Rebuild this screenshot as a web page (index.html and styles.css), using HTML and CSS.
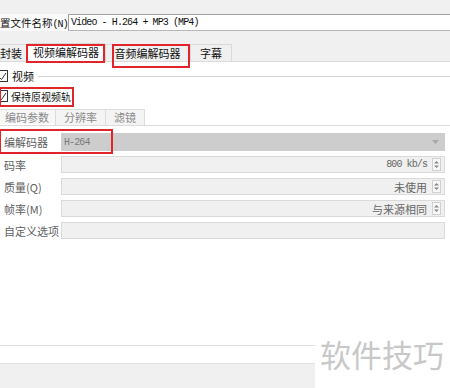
FILE: index.html
```html
<!DOCTYPE html>
<html lang="zh-CN">
  <head>
    <meta charset="UTF-8" />
    <title>视频编解码器</title>
    <link rel="stylesheet" href="styles.css">
  </head>
  <body>
    <div class="page">
      <div class="top-strip"></div>
      <div class="name-row">
        <span class="name-label">置文件名称<span class="mono">(N)</span></span>
        <div class="name-input"><span class="mono">Video - H.264 + MP3 (MP4)</span></div>
      </div>

      <div class="tabbar">
        <div class="tab tab-first">封装</div>
        <div class="tab tab-active">视频编解码器</div>
        <div class="tab tab-audio">音频编解码器</div>
        <div class="tab tab-sub">字幕</div>
      </div>

      <div class="panel">
        <div class="group-row">
          <span class="check"><svg width="9" height="9" viewBox="0 0 9 9"><path d="M1 5 L3.5 7.5 L8 1" fill="none" stroke="#333" stroke-width="1"/></svg></span>
          <span class="group-title">视频</span>
          <span class="group-line"></span>
        </div>
        <div class="check-row">
          <span class="check"><svg width="9" height="9" viewBox="0 0 9 9"><path d="M1 5 L3.5 7.5 L8 1" fill="none" stroke="#333" stroke-width="1"/></svg></span>
          <span class="check-text">保持原视频轨</span>
        </div>

        <div class="subtabs">
          <div class="subtab subtab-active">编码参数</div>
          <div class="subtab">分辨率</div>
          <div class="subtab">滤镜</div>
        </div>

        <div class="form">
          <div class="row row-combo">
            <span class="label">编解码器</span>
            <div class="field combo">
              <span class="mono">H-264</span>
              <svg class="drop" width="7" height="4" viewBox="0 0 7 4"><path d="M0 0 H7 L3.5 4 Z" fill="#a8a8a8"/></svg>
            </div>
          </div>
          <div class="row">
            <span class="label">码率</span>
            <div class="field">
              <span class="value mono">800 kb/s</span>
              <span class="spin"><svg width="5" height="9" viewBox="0 0 5 9"><path d="M0 3.5 L2.5 1 L5 3.5 Z M0 5.5 L2.5 8 L5 5.5 Z" fill="#888"/></svg></span>
            </div>
          </div>
          <div class="row">
            <span class="label">质量(Q)</span>
            <div class="field">
              <span class="value">未使用</span>
              <span class="spin"><svg width="5" height="9" viewBox="0 0 5 9"><path d="M0 3.5 L2.5 1 L5 3.5 Z M0 5.5 L2.5 8 L5 5.5 Z" fill="#888"/></svg></span>
            </div>
          </div>
          <div class="row">
            <span class="label">帧率(M)</span>
            <div class="field">
              <span class="value">与来源相同</span>
              <span class="spin"><svg width="5" height="9" viewBox="0 0 5 9"><path d="M0 3.5 L2.5 1 L5 3.5 Z M0 5.5 L2.5 8 L5 5.5 Z" fill="#888"/></svg></span>
            </div>
          </div>
          <div class="row">
            <span class="label">自定义选项</span>
            <div class="field"></div>
          </div>
        </div>
      </div>

      <div class="footer">
        <div class="footer-left">
          <div class="footer-line"></div>
          <div class="footer-bar"></div>
        </div>
        <div class="watermark">软件技巧</div>
      </div>

      <!-- annotation boxes drawn over the screenshot -->
      <div class="mark mark-video"></div>
      <div class="mark mark-audio"></div>
      <div class="mark mark-keep"></div>
      <div class="mark mark-codec"></div>
    </div>
  </body>
</html>
```

FILE: styles.css
```css
body {
  margin: 0;
  font-family: "Noto Sans CJK SC", "Noto Sans", sans-serif;
  font-size: 11px;
  color: #222;
  background-color: #ffffff;
}
.page {
  position: relative;
  width: 450px;
  height: 388px;
  display: flex;
  flex-direction: column;
  overflow: hidden;
}
.mono {
  font-family: "Liberation Mono", monospace;
  font-size: 10px;
  letter-spacing: -0.9px;
}
.top-strip {
  height: 14px;
  background-color: #f0f0f0;
}
.name-row {
  display: flex;
  height: 17px;
  background-color: #fafafa;
}
.name-label {
  width: 68px;
  flex-shrink: 0;
  font-size: 10.5px;
  line-height: 17px;
  white-space: nowrap;
  color: #111;
}
.name-input {
  flex: 1;
  display: flex;
  align-items: center;
  padding-left: 2px;
  background-color: #ffffff;
  border-top: 1px solid #a0a0a0;
  border-left: 1px solid #a0a0a0;
  border-bottom: 1px solid #b8b8b8;
  color: #111;
}
.tabbar {
  display: flex;
  align-items: flex-end;
  height: 30px;
  background-color: #f0f0f0;
  border-bottom: 1px solid #dadada;
}
.tab {
  height: 17px;
  line-height: 17px;
  text-align: center;
  color: #111;
  box-sizing: border-box;
  border: 1px solid #d9d9d9;
  border-bottom: none;
  white-space: nowrap;
}
.tab-first {
  width: 27px;
  border-left: none;
  text-align: left;
}
.tab-active {
  width: 78px;
  height: 19px;
  background-color: #ffffff;
  margin-bottom: -1px;
}
.tab-audio {
  width: 85px;
}
.tab-sub {
  width: 42px;
}
.panel {
  flex: 1;
  background-color: #ffffff;
}
.group-row {
  display: flex;
  align-items: center;
  height: 16px;
  margin-top: 6px;
}
.check {
  width: 10px;
  height: 10px;
  margin-left: -4px;
  border: 1px solid #333;
  display: flex;
  align-items: center;
  justify-content: center;
  background-color: #ffffff;
}
.group-title {
  margin-left: 4px;
  color: #111;
}
.group-line {
  flex: 1;
  height: 1px;
  margin-left: 4px;
  background-color: #d4d4d4;
}
.check-row {
  display: flex;
  align-items: center;
  height: 16px;
  margin-top: 4px;
}
.check-text {
  margin-left: 3px;
  font-size: 10px;
  color: #111;
}
.subtabs {
  display: flex;
  margin-top: 5px;
  border-bottom: 1px solid #dcdcdc;
}
.subtab {
  height: 15px;
  line-height: 15px;
  padding: 0 8px;
  color: #8a8a8a;
  background-color: #f4f4f4;
  border: 1px solid #dcdcdc;
  border-bottom: none;
  margin-left: -1px;
}
.subtab-active {
  width: 56px;
  box-sizing: border-box;
  padding: 0 0 0 5px;
  background-color: #f7f7f7;
  border-left: none;
  margin-left: 0;
}
.form {
  display: flex;
  flex-direction: column;
  gap: 5px;
  margin-top: 7px;
}
.row {
  display: flex;
  align-items: center;
  height: 17px;
}
.row-combo {
  height: 18px;
}
.label {
  width: 57px;
  padding-left: 4px;
  color: #5f5f5f;
  white-space: nowrap;
}
.field {
  width: 384px;
  height: 100%;
  box-sizing: border-box;
  display: flex;
  align-items: center;
  justify-content: flex-end;
  padding-right: 3px;
  background-color: #f0f0f0;
  border: 1px solid #dadada;
  color: #666;
}
.combo {
  justify-content: space-between;
  padding-left: 2px;
  padding-right: 5px;
  background-color: #cdcdcd;
  border-color: #cdcdcd;
  color: #7a7a7a;
}
.value {
  margin-right: 5px;
}
.spin {
  width: 7px;
  height: 11px;
  display: flex;
  align-items: center;
  justify-content: center;
  border: 1px solid #d0d0d0;
  background-color: #f7f7f7;
}
.footer {
  display: flex;
  height: 50px;
}
.footer-left {
  width: 315px;
  display: flex;
  flex-direction: column;
  padding-top: 7px;
}
.footer-line {
  height: 17px;
  border-top: 1px solid #dedede;
}
.footer-bar {
  flex: 1;
  background-color: #f0f0f0;
  border-top: 1px solid #e2e2e2;
}
.watermark {
  margin-left: 5px;
  font-size: 31px;
  line-height: 31px;
  color: #c8c8c8;
  white-space: nowrap;
}
.mark {
  position: absolute;
  border: 2px solid #e0262b;
  box-sizing: border-box;
}
.mark-video {
  left: 26px;
  top: 44px;
  width: 79px;
  height: 19px;
}
.mark-audio {
  left: 112px;
  top: 44px;
  width: 78px;
  height: 24px;
}
.mark-keep {
  left: -1px;
  top: 87px;
  width: 75px;
  height: 20px;
}
.mark-codec {
  left: -1px;
  top: 129px;
  width: 114px;
  height: 25px;
}
```
